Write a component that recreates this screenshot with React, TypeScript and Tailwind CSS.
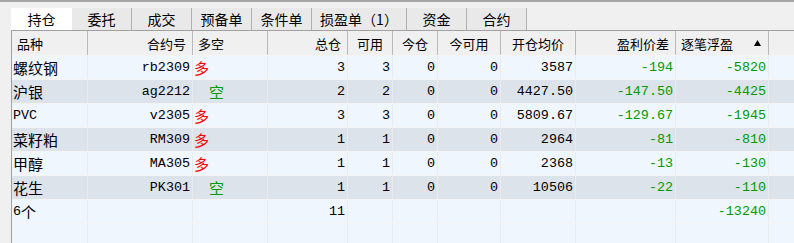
import React from "react";

const cols = [76, 105, 75, 80, 45, 45, 63, 75, 100, 93];

type Cell = { t: string; c?: "r" | "g" | "k"; zh?: boolean; align?: "l" | "r"; pl?: number };

const G = "text-[#009a00]";

const rows: { bg: string; cells: Cell[] }[] = [
  {
    bg: "bg-[#eff6fd]",
    cells: [
      { t: "螺纹钢", zh: true, align: "l" },
      { t: "rb2309" },
      { t: "多", zh: true, c: "r", align: "l" },
      { t: "3" }, { t: "3" }, { t: "0" }, { t: "0" }, { t: "3587" },
      { t: "-194", c: "g" }, { t: "-5820", c: "g" },
    ],
  },
  {
    bg: "bg-[#dce3eb]",
    cells: [
      { t: "沪银", zh: true, align: "l" },
      { t: "ag2212" },
      { t: "空", zh: true, c: "g", align: "l", pl: 16 },
      { t: "2" }, { t: "2" }, { t: "0" }, { t: "0" }, { t: "4427.50" },
      { t: "-147.50", c: "g" }, { t: "-4425", c: "g" },
    ],
  },
  {
    bg: "bg-[#eff6fd]",
    cells: [
      { t: "PVC", align: "l" },
      { t: "v2305" },
      { t: "多", zh: true, c: "r", align: "l" },
      { t: "3" }, { t: "3" }, { t: "0" }, { t: "0" }, { t: "5809.67" },
      { t: "-129.67", c: "g" }, { t: "-1945", c: "g" },
    ],
  },
  {
    bg: "bg-[#dce3eb]",
    cells: [
      { t: "菜籽粕", zh: true, align: "l" },
      { t: "RM309" },
      { t: "多", zh: true, c: "r", align: "l" },
      { t: "1" }, { t: "1" }, { t: "0" }, { t: "0" }, { t: "2964" },
      { t: "-81", c: "g" }, { t: "-810", c: "g" },
    ],
  },
  {
    bg: "bg-[#eff6fd]",
    cells: [
      { t: "甲醇", zh: true, align: "l" },
      { t: "MA305" },
      { t: "多", zh: true, c: "r", align: "l" },
      { t: "1" }, { t: "1" }, { t: "0" }, { t: "0" }, { t: "2368" },
      { t: "-13", c: "g" }, { t: "-130", c: "g" },
    ],
  },
  {
    bg: "bg-[#dce3eb]",
    cells: [
      { t: "花生", zh: true, align: "l" },
      { t: "PK301" },
      { t: "空", zh: true, c: "g", align: "l", pl: 16 },
      { t: "1" }, { t: "1" }, { t: "0" }, { t: "0" }, { t: "10506" },
      { t: "-22", c: "g" }, { t: "-110", c: "g" },
    ],
  },
  {
    bg: "bg-[#eff6fd]",
    cells: [
      { t: "6个", align: "l" },
      { t: "" }, { t: "" },
      { t: "11" }, { t: "" }, { t: "" }, { t: "" }, { t: "" }, { t: "" },
      { t: "-13240", c: "g" },
    ],
  },
  {
    bg: "bg-[#eff6fd]",
    cells: [
      { t: "" }, { t: "" }, { t: "" }, { t: "" }, { t: "" }, { t: "" }, { t: "" }, { t: "" }, { t: "" }, { t: "" },
    ],
  },
];

const headers: { t: string; align: "l" | "r" | "c" }[] = [
  { t: "品种", align: "l" },
  { t: "合约号", align: "r" },
  { t: "多空", align: "l" },
  { t: "总仓", align: "r" },
  { t: "可用", align: "c" },
  { t: "今仓", align: "c" },
  { t: "今可用", align: "c" },
  { t: "开仓均价", align: "c" },
  { t: "盈利价差", align: "r" },
  { t: "逐笔浮盈", align: "l" },
];

const tabs = [
  { t: "持仓", w: 61 },
  { t: "委托", w: 60 },
  { t: "成交", w: 60 },
  { t: "预备单", w: 60 },
  { t: "条件单", w: 60 },
  { t: "损盈单（1）", w: 95 },
  { t: "资金", w: 60 },
  { t: "合约", w: 60 },
];

function renderText(t: string, zh?: boolean) {
  if (!t) return null;
  if (t === "6个") {
    return (
      <>
        <span>6</span>
        <span className="font-['Noto_Sans_CJK_SC',sans-serif] text-[15px] leading-none">个</span>
      </>
    );
  }
  if (zh) {
    return <span className="font-['Noto_Sans_CJK_SC',sans-serif] text-[15px] leading-none">{t}</span>;
  }
  return <span>{t}</span>;
}

export default function App() {
  return (
    <div className="w-[794px] h-[243px] bg-[#f0f0f0] border-t-2 border-[#a5a5a5] overflow-hidden">
      <div className="flex pt-[6px] pl-[11px] h-[28px]">
        {tabs.map((tab, i) => (
          <div
            key={tab.t}
            style={{ width: tab.w }}
            className={
              i === 0
                ? "h-[22px] bg-white flex items-center justify-center"
                : "h-[22px] bg-[#e9e9e9] flex items-center justify-center border-r border-[#b0b0b0] " +
                  (i === 1 ? "border-l-0" : "")
            }
          >
            <span className="font-['Noto_Sans_CJK_SC',sans-serif] text-[14px] leading-none text-black">
              {tab.t}
            </span>
          </div>
        ))}
      </div>
      <div className="ml-[11px] border-l border-t border-[#a0a0a0]">
        <div className="flex h-[24px] bg-[#f0f0f0]">
          {headers.map((h, i) => (
            <div
              key={h.t}
              style={{ width: cols[i] }}
              className={
                "flex items-center border-r border-[#b9b9b9] shrink-0 " +
                (h.align === "l"
                  ? "justify-start pl-[5px]"
                  : h.align === "r"
                  ? "justify-end pr-[6px]"
                  : "justify-center")
              }
            >
              <span className="font-['Noto_Sans_CJK_SC',sans-serif] text-[13px] leading-none text-black">
                {h.t}
              </span>
              {i === 9 && (
                <svg width="7" height="6" viewBox="0 0 7 6" className="ml-auto mr-[7px]">
                  <polygon points="3.5,0 7,6 0,6" fill="#000" />
                </svg>
              )}
            </div>
          ))}
          <div className="flex-1" />
        </div>
        {rows.map((row, ri) => (
          <div key={ri} className={"flex h-[24px] border-t border-[#f4f4f4] " + row.bg}>
            {row.cells.map((c, ci) => (
              <div
                key={ci}
                style={{ width: cols[ci], paddingLeft: c.pl !== undefined ? c.pl : undefined }}
                className={
                  "flex items-center shrink-0 border-r border-[#ebebeb] font-['Liberation_Mono',monospace] text-[13.4px] leading-none " +
                  (c.align === "l" ? "justify-start pl-[1px] " : "justify-end pr-[2px] ") +
                  (c.c === "r" ? "text-[#ff0000]" : c.c === "g" ? G : "text-black")
                }
              >
                {renderText(c.t, c.zh)}
              </div>
            ))}
            <div className="flex-1" />
          </div>
        ))}
      </div>
    </div>
  );
}
